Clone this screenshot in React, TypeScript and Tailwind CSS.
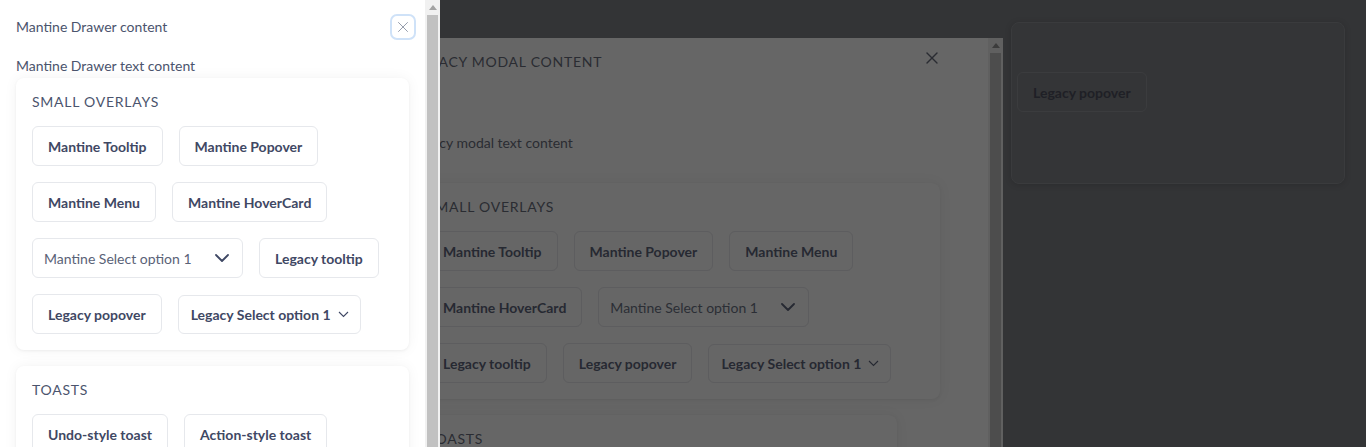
import { X } from 'lucide-react';

type Tone = 'drawer' | 'modal';

const styles = {
  drawer: {
    card: 'bg-white',
    title: 'text-[#4b546d]',
    btn: 'bg-white border-[#e6e8ec] text-[#3f4864]',
    select: 'text-[#5a6277]',
    chevron: '#3f4864',
  },
  modal: {
    card: 'bg-[#666666]',
    title: 'text-[#2a2c32]',
    btn: 'bg-[#666666] border-[#5d5d5f] text-[#262932]',
    select: 'text-[#2b2e35]',
    chevron: '#262932',
  },
};

function Chevron({ legacy, color }: { legacy?: boolean; color: string }) {
  if (legacy) {
    return (
      <svg width="11" height="7" viewBox="0 0 11 7" fill="none">
        <path d="M1 1l4.5 4.5L10 1" stroke={color} strokeWidth="1.1" />
      </svg>
    );
  }
  return (
    <svg width="14" height="8" viewBox="0 0 14 8" fill="none">
      <path d="M1 1l6 6 6-6" stroke={color} strokeWidth="1.8" strokeLinecap="round" strokeLinejoin="round" />
    </svg>
  );
}

function Btn({ tone, children }: { tone: Tone; children: React.ReactNode }) {
  return (
    <button
      className={`h-10 px-[15px] rounded-md border text-[14px] font-bold whitespace-nowrap ${styles[tone].btn}`}
    >
      {children}
    </button>
  );
}

function Card({
  tone,
  title,
  className = '',
  children,
}: {
  tone: Tone;
  title: string;
  className?: string;
  children: React.ReactNode;
}) {
  const s = styles[tone];
  return (
    <section
      className={`rounded-lg p-4 shadow-[0_1px_3px_rgba(0,0,0,0.05),0_0_14px_rgba(0,0,0,0.05)] ${s.card} ${className}`}
    >
      <h2 className={`text-[14px] leading-4 tracking-[0.75px] uppercase mb-4 ${s.title}`}>{title}</h2>
      <div className="flex flex-wrap gap-4">{children}</div>
    </section>
  );
}

function SmallOverlays({ tone }: { tone: Tone }) {
  const s = styles[tone];
  return (
    <Card tone={tone} title="Small overlays">
      <Btn tone={tone}>Mantine Tooltip</Btn>
      <Btn tone={tone}>Mantine Popover</Btn>
      <Btn tone={tone}>Mantine Menu</Btn>
      <Btn tone={tone}>Mantine HoverCard</Btn>
      <div
        className={`w-[211px] h-10 rounded-md border flex items-center justify-between pl-[11px] pr-[13px] text-[14px] ${s.btn}`}
      >
        <span className={s.select}>Mantine Select option 1</span>
        <Chevron color={s.chevron} />
      </div>
      <Btn tone={tone}>Legacy tooltip</Btn>
      <Btn tone={tone}>Legacy popover</Btn>
      <div
        className={`h-[39px] mt-px rounded-md border flex items-center gap-[7px] pl-3 pr-[11px] text-[14px] font-bold whitespace-nowrap ${s.btn}`}
      >
        Legacy Select option 1
        <Chevron legacy color={s.chevron} />
      </div>
    </Card>
  );
}

function Toasts({ tone, className = '' }: { tone: Tone; className?: string }) {
  return (
    <Card tone={tone} title="Toasts" className={className}>
      <Btn tone={tone}>Undo-style toast</Btn>
      <Btn tone={tone}>Action-style toast</Btn>
    </Card>
  );
}

function Scrollbar({ track, thumb, arrow }: { track: string; thumb: string; arrow: string }) {
  return (
    <div className={`w-[15px] shrink-0 flex flex-col ${track}`}>
      <div className="h-[15px] flex items-center justify-center">
        <svg width="8" height="5" viewBox="0 0 8 5">
          <path d="M0 5L4 0l4 5z" fill={arrow} />
        </svg>
      </div>
      <div className={`flex-1 mx-[2px] ${thumb}`} />
    </div>
  );
}

export default function App() {
  return (
    <div className="relative w-[1366px] h-[447px] overflow-hidden bg-[#333436] font-['Lato',sans-serif]">
      {/* page behind, dimmed by both overlays */}
      <div className="flex pt-[22px] pl-[1011px]">
        <div className="w-[334px] h-[162px] rounded-lg border border-[#3a3b3d] bg-[#343537] shadow-[0_1px_6px_rgba(0,0,0,0.15)] pt-[49px] pl-[5px]">
          <button className="h-[40px] px-[15px] rounded-md border border-[#3b3c3e] text-[14px] font-bold text-[#1f2026]">
            Legacy popover
          </button>
        </div>
      </div>

      {/* legacy modal */}
      <div className="absolute left-[363px] top-[38px] w-[640px] h-[409px] overflow-hidden flex bg-[#666666]">
        <div className="flex-1 px-12 pt-[13px]">
          <div className="flex items-start justify-between">
            <h1 className="text-[14px] leading-[22px] tracking-[0.75px] uppercase text-[#2a2c32]">
              Legacy modal content
            </h1>
            <X size={20} strokeWidth={1.6} className="text-[#2a2c32] -mt-[3px] -mr-[2px]" />
          </div>
          <p className="mt-[58px] text-[14px] leading-6 text-[#2a2c32]">Legacy modal text content</p>
          <div className="mt-[28px] flex flex-col gap-4">
            <SmallOverlays tone="modal" />
            <Toasts tone="modal" className="w-[486px]" />
          </div>
        </div>
        <Scrollbar track="bg-[#606060]" thumb="bg-[#4d4d4d]" arrow="#3c3c3c" />
      </div>

      {/* mantine drawer */}
      <div className="absolute left-0 top-0 w-[440px] h-full flex bg-white">
        <div className="flex-1 min-w-0 overflow-hidden">
          <div className="flex items-center justify-between pl-4 pr-[9px] pt-[14px]">
            <h1 className="text-[14px] leading-6 text-[#4b546d]">Mantine Drawer content</h1>
            <button className="w-[26px] h-[26px] rounded-[7px] border-2 border-[#cfe2f8] flex items-center justify-center">
              <X size={18} strokeWidth={1.2} className="text-[#8a92a3]" />
            </button>
          </div>
          <div className="px-4">
            <p className="mt-[14px] text-[14px] leading-6 text-[#4b546d]">Mantine Drawer text content</p>
            <div className="flex flex-col gap-4">
              <SmallOverlays tone="drawer" />
              <Toasts tone="drawer" />
            </div>
          </div>
        </div>
        <Scrollbar track="bg-[#f1f1f1]" thumb="bg-[#c1c1c1]" arrow="#a3a3a3" />
      </div>
    </div>
  );
}
